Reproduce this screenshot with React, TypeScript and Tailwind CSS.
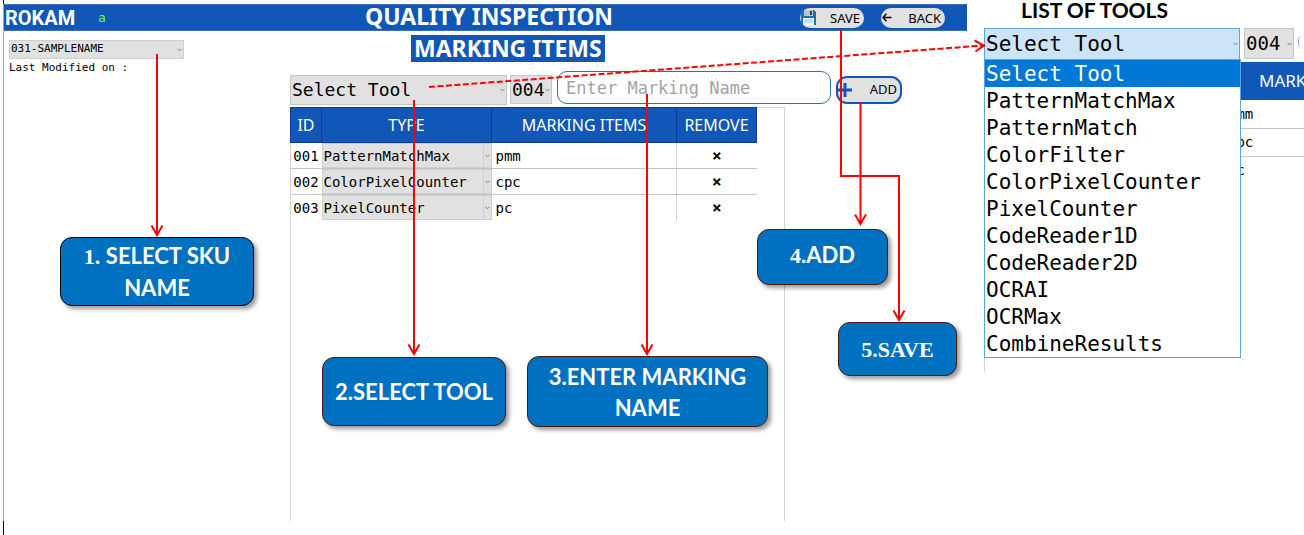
import React from "react";

const MONO = "font-['DejaVu_Sans_Mono','Liberation_Mono',monospace]";
const UI = "font-['Noto_Sans','Open_Sans',sans-serif]";
const HUMAN = "font-['Lato','Open_Sans',sans-serif]";

const tools = [
  "Select Tool",
  "PatternMatchMax",
  "PatternMatch",
  "ColorFilter",
  "ColorPixelCounter",
  "PixelCounter",
  "CodeReader1D",
  "CodeReader2D",
  "OCRAI",
  "OCRMax",
  "CombineResults",
];

const rows = [
  { id: "001", type: "PatternMatchMax", name: "pmm" },
  { id: "002", type: "ColorPixelCounter", name: "cpc" },
  { id: "003", type: "PixelCounter", name: "pc" },
];

type PickerProps = {
  label: string;
  value: string;
  options?: string[];
  className: string;
  divided?: boolean;
};

function Picker({ label, value, options, className, divided }: PickerProps) {
  return (
    <div className={`relative flex ${MONO} ${className}`}>
      <select
        aria-label={label}
        defaultValue={value}
        className="w-full appearance-none bg-transparent pl-px text-black outline-none"
      >
        {(options ?? [value]).map((o) => (
          <option key={o}>{o}</option>
        ))}
      </select>
      <span
        className={`pointer-events-none absolute inset-y-0 right-0 flex w-2 items-center justify-center ${
          divided ? "border-l border-[#cfcfcf]" : ""
        }`}
      >
        <svg width="5" height="4" viewBox="0 0 5 4" fill="none" stroke="#7a7a7a">
          <path d="M0.5 0.8 2.5 2.8 4.5 0.8" />
        </svg>
      </span>
    </div>
  );
}

function FloppyIcon() {
  return (
    <svg width="15" height="15" viewBox="0 0 15 15">
      <path d="M1 0h12l2 2v13H0V1z" fill="#1d6fb8" />
      <path d="M3 0h9v6H3z" fill="#b9c4cc" />
      <path d="M9 1h2v4H9z" fill="#26445c" />
      <path d="M2 8h11v7H2z" fill="#f4f8fb" />
      <path d="M3 10h9M3 12h9" stroke="#9cc3e0" />
    </svg>
  );
}

function Header() {
  return (
    <header className="flex h-[27px] items-center border-y border-[#3a6fb5] bg-[#1057b7]">
      <div className="flex flex-1 items-center pl-px">
        <span className="w-[68px] font-['Roboto',sans-serif] text-[20px] leading-6 font-bold text-white">
          ROKAM
        </span>
        <span className={`pl-[25px] text-[13px] text-[#6dff2e] ${MONO}`}>a</span>
      </div>
      <h1 className={`pb-1 pl-7 text-[23px] leading-6 font-bold text-white ${UI}`}>QUALITY INSPECTION</h1>
      <div className={`flex flex-1 justify-end gap-[17px] pr-[22px] text-[13px] leading-5 ${UI}`}>
        <button className="flex h-5 w-16 items-center justify-between rounded-full bg-[#e1e1e1] pr-1 pl-px text-black">
          <FloppyIcon />
          SAVE
        </button>
        <button className="flex h-5 w-16 items-center justify-between rounded-full bg-[#e1e1e1] pr-1 pl-px text-black">
          <svg width="10" height="9" viewBox="0 0 10 9" fill="none" stroke="#000" strokeWidth="1.4">
            <path d="M9.5 4.5H1M4.5 0.8 0.9 4.5 4.5 8.2" />
          </svg>
          BACK
        </button>
      </div>
    </header>
  );
}

function MarkingTable() {
  const th = "h-[35px] border border-[#0b3a9c] p-0 font-normal";
  const td = "h-[26px] border-b border-[#c4c4c4] p-0 group-last:border-b-0";
  return (
    <table className="-mt-px -ml-px w-[466px] table-fixed border-collapse text-black">
      <colgroup>
        <col className="w-[31px]" />
        <col className="w-[170px]" />
        <col className="w-[185px]" />
        <col className="w-[80px]" />
      </colgroup>
      <thead className={`bg-[#1057b7] text-base text-white ${UI}`}>
        <tr>
          <th className={th}>ID</th>
          <th className={th}>TYPE</th>
          <th className={th}>MARKING ITEMS</th>
          <th className={th}>REMOVE</th>
        </tr>
      </thead>
      <tbody className={`text-sm ${MONO}`}>
        {rows.map((r) => (
          <tr key={r.id} className="group">
            <td className={`${td} text-center`}>{r.id}</td>
            <td className={td}>
              <Picker
                label={`Type of item ${r.id}`}
                value={r.type}
                options={tools}
                divided
                className="h-[25px] border border-[#cfcfcf] bg-[#e1e1e1] text-sm"
              />
            </td>
            <td className={`${td} border-r border-r-[#d4d4d4]`}>
              <input
                aria-label={`Name of item ${r.id}`}
                defaultValue={r.name}
                className="block w-full bg-transparent pl-1 outline-none"
              />
            </td>
            <td className={`${td} text-center`}>
              <button aria-label={`Remove item ${r.id}`} className="text-base leading-5 font-bold">
                ×
              </button>
            </td>
          </tr>
        ))}
      </tbody>
    </table>
  );
}

function Editor() {
  return (
    <main className="flex flex-1 flex-col pt-1">
      <h2
        className={`ml-[121px] h-[27px] self-start bg-[#1057b7] px-[3px] text-[23px] leading-[27px] font-bold text-white ${UI}`}
      >
        MARKING ITEMS
      </h2>
      <div className="mt-[9px] flex h-9 items-start">
        <Picker
          label="Tool"
          value="Select Tool"
          options={tools}
          className="mt-1 h-[30px] w-[217px] border border-[#c6c6c6] bg-[#e1e1e1] text-lg"
        />
        <Picker
          label="Item number"
          value="004"
          className="mt-1 ml-[3px] h-[29px] w-[42px] border border-[#c6c6c6] bg-[#e1e1e1] text-lg"
        />
        <input
          aria-label="Marking name"
          placeholder="Enter Marking Name"
          className={`ml-[5px] h-[33px] w-[274px] rounded-[10px] border border-[#2f6cc0] bg-white px-2 text-[17px] outline-none placeholder:text-[#a3a3a3] ${MONO}`}
        />
        <button
          className={`mt-[5px] ml-[5px] flex h-7 w-[66px] items-center justify-between rounded-[11px] border-2 border-[#1057b7] bg-[#e1e1e1] pr-[3px] text-[13px] text-black ${UI}`}
        >
          <svg width="14" height="14" viewBox="0 0 14 14" stroke="#1057b7" strokeWidth="3">
            <path d="M7 0v14M0 7h14" />
          </svg>
          ADD
        </button>
      </div>
      <section className="mb-[14px] w-[495px] flex-1 border-t border-r border-l border-[#d4d4d4]">
        <MarkingTable />
      </section>
    </main>
  );
}

function ToolList() {
  return (
    <aside className="w-80 shrink-0 overflow-hidden">
      <h2 className={`h-7 pl-[37px] text-[21px] leading-5 font-bold text-black ${HUMAN}`}>LIST OF TOOLS</h2>
      <div className="relative flex gap-1">
        <Picker
          label="Tool list"
          value="Select Tool"
          options={tools}
          className="h-8 w-64 shrink-0 border border-[#5ba5dd] bg-[#cce4f7] text-[21px]"
        />
        <Picker
          label="Next item number"
          value="004"
          className="h-[31px] w-[50px] shrink-0 border border-[#c6c6c6] bg-[#e1e1e1] text-[19px]"
        />
        <span className="mt-2 h-3 w-1 shrink-0 rounded-l border-l border-[#8fb4e0]" />
        <ul
          role="listbox"
          aria-label="Tools"
          className={`absolute top-[31px] left-0 z-10 w-[257px] border border-[#5ba5dd] bg-white text-[21px] leading-[29px] text-black ${MONO}`}
        >
          {tools.map((t, i) => (
            <li
              key={t}
              role="option"
              aria-selected={i === 0}
              className="h-[27px] pl-px aria-selected:bg-[#0078d7] aria-selected:text-white"
            >
              {t}
            </li>
          ))}
        </ul>
      </div>
      <div className="mt-[2px] h-[310px] border-l border-[#d4d4d4] pl-[239px]">
        <table className="w-full text-left whitespace-nowrap text-black">
          <thead>
            <tr>
              <th className={`h-[38px] max-w-20 bg-[#1057b7] p-0 pl-[35px] text-[17px] font-normal text-white ${UI}`}>
                MARKING ITEMS
              </th>
            </tr>
          </thead>
          <tbody className={`text-sm ${MONO}`}>
            {rows.map((r) => (
              <tr key={r.id} className="group">
                <td className="h-7 border-b border-[#c4c4c4] p-0 pl-1 group-last:border-b-0">{r.name}</td>
              </tr>
            ))}
          </tbody>
        </table>
      </div>
    </aside>
  );
}

function Callout({ className, children }: { className: string; children: React.ReactNode }) {
  return (
    <p
      className={`absolute z-20 flex items-center justify-center rounded-xl border bg-[#0070c0] text-center text-[22px] leading-[31px] font-bold text-white shadow-[3px_3px_4px_rgba(0,0,0,0.4)] ${className}`}
    >
      {children}
    </p>
  );
}

const SERIF = "font-['Liberation_Serif',serif]";

function Annotations() {
  return (
    <>
      <svg
        className="pointer-events-none absolute top-0 left-0 z-20 h-[535px] w-[1304px]"
        viewBox="0 0 1304 535"
        fill="none"
        stroke="#ff0000"
        strokeWidth="2"
      >
        <path d="M157 54V235M151.500 225.500 157 235 162.500 225.500" />
        <path d="M414 100V354M408.500 344.500 414 354 419.500 344.500" />
        <path d="M647 94V354M641.500 344.500 647 354 652.500 344.500" />
        <path d="M860.500 102V224M855 214.500 860.500 224 866 214.500" />
        <path d="M841 29V176H899V320M893.500 310.500 899 320 904.500 310.500" />
        <path d="M429 87 983 45.500" strokeDasharray="6 2.500" />
        <path d="M974.500 40.500 984 45.500 975.500 51.500" />
      </svg>
      <Callout className={`top-[237px] left-[60px] h-[69px] w-[194px] border-black ${HUMAN}`}>
        <span>
          <span className={SERIF}>1. </span>SELECT SKU
          <br />
          NAME
        </span>
      </Callout>
      <Callout className={`top-[357px] left-[322px] h-[69px] w-[184px] border-[#4a1a10] ${HUMAN}`}>
        2.SELECT TOOL
      </Callout>
      <Callout className={`top-[356px] left-[527px] h-[71px] w-[241px] border-[#4a1a10] ${HUMAN}`}>
        <span>
          3.ENTER MARKING
          <br />
          NAME
        </span>
      </Callout>
      <Callout className={`top-[229px] left-[757px] h-[56px] w-[131px] border-[#4a1a10] pb-1 ${HUMAN}`}>
        <span>
          <span className={SERIF}>4</span>.ADD
        </span>
      </Callout>
      <Callout className={`top-[322px] left-[838px] h-[54px] w-[119px] border-[#4a1a10] ${SERIF}`}>5.SAVE</Callout>
    </>
  );
}

export default function App() {
  return (
    <div className="relative flex min-h-screen gap-[17px] overflow-hidden bg-white pl-[3px]">
      <div className="flex flex-1 flex-col">
        <div className="h-1 border-l border-black" />
        <div className="flex flex-1 flex-col border-l border-[#9aa7bd]">
          <Header />
          <div className="flex flex-1">
            <aside className={`w-[286px] pt-[9px] pl-[5px] text-[11px] text-black ${MONO}`}>
              <Picker
                label="SKU name"
                value="031-SAMPLENAME"
                className="h-[19px] w-[175px] border border-[#cfcfcf] bg-[#e1e1e1]"
              />
              <p className="pt-px leading-4">Last Modified on :</p>
            </aside>
            <Editor />
          </div>
        </div>
        <div className="-mt-[14px] h-[14px] border-l border-black" />
      </div>
      <ToolList />
      <Annotations />
    </div>
  );
}
